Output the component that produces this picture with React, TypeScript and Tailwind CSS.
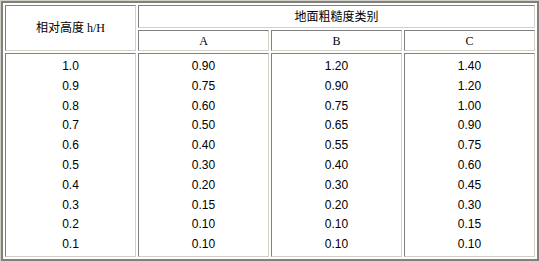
const heights = ["1.0", "0.9", "0.8", "0.7", "0.6", "0.5", "0.4", "0.3", "0.2", "0.1"];
const colA = ["0.90", "0.75", "0.60", "0.50", "0.40", "0.30", "0.20", "0.15", "0.10", "0.10"];
const colB = ["1.20", "0.90", "0.75", "0.65", "0.55", "0.40", "0.30", "0.20", "0.10", "0.10"];
const colC = ["1.40", "1.20", "1.00", "0.90", "0.75", "0.60", "0.45", "0.30", "0.15", "0.10"];

const cell = "border border-t-[#808080] border-l-[#808080] border-b-[#d4d0c8] border-r-[#d4d0c8] p-0 text-center align-middle";

function Lines({ items }: { items: string[] }) {
  return (
    <div className="flex flex-col items-center pt-[3px] font-['Liberation_Sans',sans-serif] text-[12px] leading-[19.8px] text-black">
      {items.map((v, i) => (
        <span key={i}>{v}</span>
      ))}
    </div>
  );
}

export default function App() {
  return (
    <div className="w-[539px] h-[261px] bg-white border-t border-l border-t-[#d4d0c8] border-l-[#d4d0c8]">
      <table className="w-full h-full table-fixed border-separate border-spacing-[2px] border-2 border-[#808080] font-['Liberation_Serif','Noto_Sans_CJK_SC',serif] text-[12px] text-black">
        <tbody>
          <tr className="h-[23px]">
            <td rowSpan={2} className={cell}>相对高度 h/H</td>
            <td colSpan={3} className={cell}>地面粗糙度类别</td>
          </tr>
          <tr className="h-[21px]">
            <td className={cell}>A</td>
            <td className={cell}>B</td>
            <td className={cell}>C</td>
          </tr>
          <tr>
            <td className={cell + " align-top"}><Lines items={heights} /></td>
            <td className={cell + " align-top"}><Lines items={colA} /></td>
            <td className={cell + " align-top"}><Lines items={colB} /></td>
            <td className={cell + " align-top"}><Lines items={colC} /></td>
          </tr>
        </tbody>
      </table>
    </div>
  );
}
